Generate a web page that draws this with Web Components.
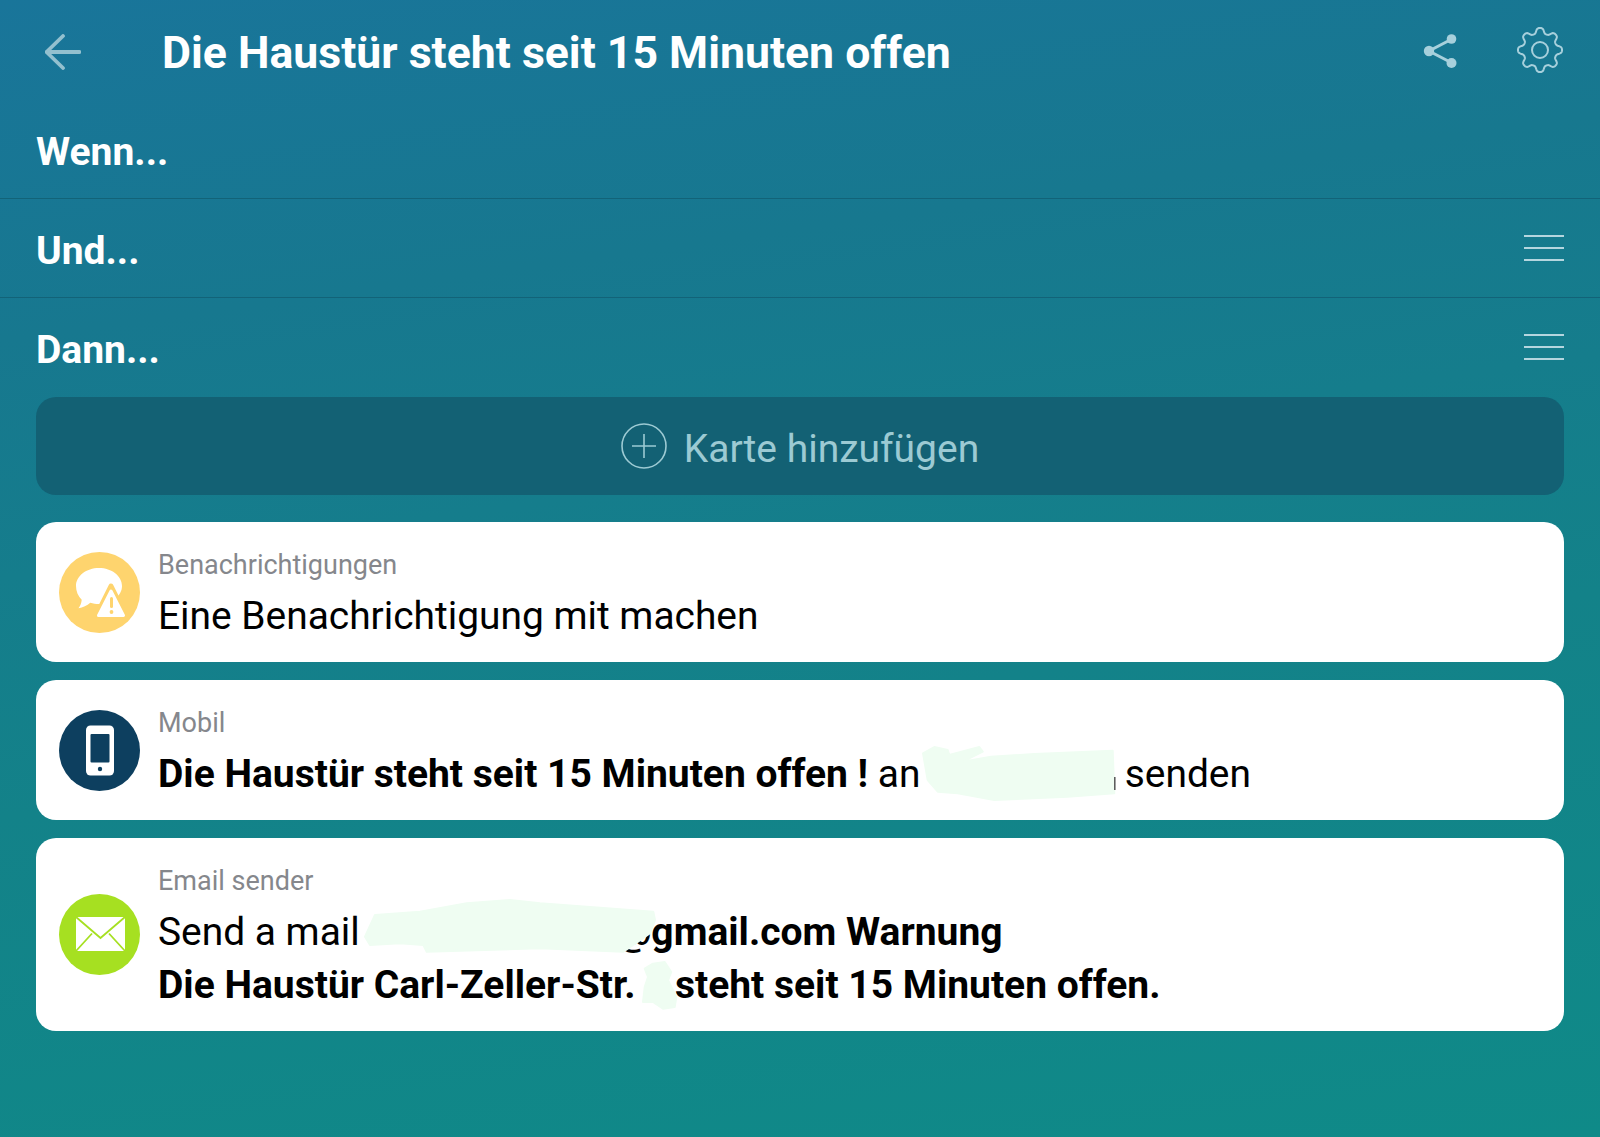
<!DOCTYPE html>
<html lang="de"><head><meta charset="utf-8"><title>Flow</title>
<style>
html,body{margin:0;padding:0;height:100%}
body{width:1600px;height:1137px;overflow:hidden;font-family:Roboto,"Liberation Sans",sans-serif;background:linear-gradient(172deg,#19759a 0%,#17788f 25%,#138289 60%,#0f8a88 100%);}
</style></head><body>
<flow-page></flow-page>
<template id="t-page"><style>
:host{display:flex;flex-direction:column;height:1137px}
.list{display:flex;flex-direction:column;gap:18px;padding:0 36px;margin-top:27px}
.pad{padding:0 36px}
b{font-weight:700;font-size:39px;line-height:0}
</style>
<flow-header></flow-header>
<flow-section label="Wenn..." divider></flow-section>
<flow-section label="Und..." divider menu></flow-section>
<flow-section label="Dann..." menu></flow-section>
<div class="pad"><add-card>Karte hinzufügen</add-card></div>
<div class="list">
<flow-card kind="bell" label="Benachrichtigungen">Eine Benachrichtigung mit machen</flow-card>
<flow-card kind="phone" label="Mobil"><b>Die Haustür steht seit 15 Minuten offen !</b> an <redact-blob kind="a"></redact-blob> senden</flow-card>
<flow-card kind="mail" label="Email sender">Send a mail <redact-blob kind="b"></redact-blob><b>@gmail.com Warnung</b><br><b>Die Haustür Carl-Zeller-Str. <redact-blob kind="c"></redact-blob> steht seit 15 Minuten offen.</b></flow-card>
</div>
</template>
<script>
function gearPath(cx,cy){
  let d='';
  for(let i=0;i<=240;i++){
    const t=i/240*Math.PI*2;
    const c=Math.cos(8*t);
    const s=Math.tanh(1.6*c)/Math.tanh(1.6);
    const r=19.4+2.6*s;
    const x=cx+r*Math.sin(t),y=cy-r*Math.cos(t);
    d+=(i?'L':'M')+x.toFixed(2)+' '+y.toFixed(2);
  }
  return d+'Z';
}
function el(name,cls){customElements.define(name,cls)}
el('flow-page',class extends HTMLElement{connectedCallback(){
  this.attachShadow({mode:'open'}).appendChild(document.getElementById('t-page').content.cloneNode(true));
}});
el('flow-header',class extends HTMLElement{connectedCallback(){
  this.attachShadow({mode:'open'}).innerHTML=`<style>
  :host{display:flex;align-items:center;height:100px;box-sizing:border-box;padding:4px 36px 0 45px;color:#fff}
  .back{width:36px;height:36px;flex:none;margin-right:81px}
  h1{margin:0;flex:1;font:700 44.6px/52px Roboto,sans-serif;letter-spacing:0;margin-top:2px}
  .ic{flex:none;display:block}
  </style>
  <svg class="back" viewBox="0 0 36 36" fill="none" stroke="#93c0cf" stroke-width="3.8" stroke-linecap="round" stroke-linejoin="round"><path d="M1.5 18H34.500M18 2L1.500 18L18 34"/></svg>
  <h1>Die Haustür steht seit 15 Minuten offen</h1>
  <svg class="ic" style="width:40px;height:40px;margin-right:53px;margin-top:-2px" viewBox="0 0 40 40"><g fill="#a7d0dc" stroke="#a7d0dc"><path d="M29 8L6 20L29 32" fill="none" stroke-width="3"/><circle cx="28.500" cy="8" r="4.800" stroke="none"/><circle cx="6" cy="20" r="5.200" stroke="none"/><circle cx="28.500" cy="32" r="5" stroke="none"/></g></svg>
  <svg class="ic" style="width:48px;height:48px;margin-top:-4px" viewBox="0 0 48 48" fill="none" stroke="#a7d0dc" stroke-width="2"><path d="${gearPath(24,24)}"/><circle cx="24" cy="24" r="8"/></svg>`;
}});
el('flow-section',class extends HTMLElement{connectedCallback(){
  const menu=this.hasAttribute('menu');
  this.attachShadow({mode:'open'}).innerHTML=`<style>
  :host{display:flex;align-items:center;justify-content:space-between;height:99px;box-sizing:border-box;padding:5px 36px 0;color:#fff;${this.hasAttribute('divider')?'border-bottom:1px solid #126378;':''}}
  .t{font:700 39px/46px Roboto,sans-serif}
  .m{display:flex;flex-direction:column;gap:10px;margin-top:-6px}
  .m i{display:block;width:40px;height:2px;background:#b5d6df}
  </style><div class="t">${this.getAttribute('label')}</div>${menu?'<div class="m"><i></i><i></i><i></i></div>':''}`;
}});
el('add-card',class extends HTMLElement{connectedCallback(){
  this.attachShadow({mode:'open'}).innerHTML=`<style>
  :host{display:flex;align-items:center;justify-content:center;gap:17px;height:98px;border-radius:20px;background:#136174;color:#9ccad3;font:400 39px/46px Roboto,sans-serif}
  svg{width:46px;height:46px;flex:none;margin-top:0}
  span{margin-top:6px}
  </style><svg viewBox="0 0 46 46" fill="none" stroke="#9ccad3" stroke-width="1.6"><circle cx="23" cy="23" r="22"/><path d="M23 11V35M11 23H35"/></svg><span><slot></slot></span>`;
}});
const icons={
bell:`<svg viewBox="0 0 81 81"><circle cx="40.500" cy="40.500" r="40.500" fill="#fed46e"/><path d="M40 16c12.700 0 23 8 23 18s-10.300 18-23 18c-3 0-6-.4-8.700-1.300C28 53.500 24 55.500 19.500 56.300c1.900-2.700 3-5.400 3.200-8.600C19 44 17 39.200 17 34c0-10 10.300-18 23-18z" fill="#fff"/><path d="M52 34L68 66H36Z" fill="#fed46e" stroke="#fed46e" stroke-width="5" stroke-linejoin="round"/><path d="M52 39L64.500 63.500H39.500Z" fill="#fff" stroke="#fff" stroke-width="3" stroke-linejoin="round"/><path d="M52.500 46.500v8" stroke="#fed46e" stroke-width="3" stroke-linecap="round"/><circle cx="52.500" cy="60" r="1.900" fill="#fed46e"/></svg>`,
phone:`<svg viewBox="0 0 81 81"><circle cx="40.500" cy="40.500" r="40.500" fill="#0d3f5f"/><rect x="27" y="15.500" width="28" height="50" rx="4.500" fill="#fff"/><rect x="31.500" y="24" width="19" height="28.500" rx="1" fill="#0d3f5f"/><circle cx="41" cy="59" r="2.200" fill="#0d3f5f"/></svg>`,
mail:`<svg viewBox="0 0 81 81"><circle cx="40.500" cy="40.500" r="40.500" fill="#a6e021"/><path d="M17 23H66V57H17z" fill="#fff"/><path d="M17 23L41.500 44L66 23" fill="none" stroke="#a6e021" stroke-width="1.800"/><path d="M17 57L33 39.500M66 57L50 39.500" stroke="#a6e021" stroke-width="1.800"/></svg>`};
el('flow-card',class extends HTMLElement{connectedCallback(){
  this.attachShadow({mode:'open'}).innerHTML=`<style>
  :host{display:flex;align-items:center;gap:18px;background:#fff;border-radius:20px;padding:0 23px;color:#000}
  .i{width:81px;height:81px;flex:none;display:block}
  .i svg{display:block;width:81px;height:81px}
  .b{padding:26px 0 20px}
  .l{font:400 27px/34px Roboto,sans-serif;color:#85878c;margin-bottom:7px}
  .c{font:400 38.9px/53px Roboto,sans-serif}
  </style><div class="i">${icons[this.getAttribute('kind')]}</div><div class="b"><div class="l">${this.getAttribute('label')}</div><div class="c"><slot></slot></div></div>`;
}});
const blobs={
a:{w:185,x:-7,y:-39,vw:193,vh:53,d:'M0 6.300L11.300 0L24.700 3L26.300 8L56.300 0L59.700 4.700L39.700 14.700L68 9.700L111.300 7L189.700 3.700L191.300 46.300L144.700 49.700L71.300 53L34.700 46.300L14.700 44.700L4.700 33Z',extra:'<path d="M191.800 30V43" stroke="#555" stroke-width="1.500"/>'},
b:{w:247,x:-4,y:-44,vw:290,vh:52,d:'M0 36.700L10 15L55 11.700L101.700 3.300L145 0L175 3.300L241.700 8.300L288.300 11.700L290 20L285 33.300L268.300 45L258.300 51.700L175 48.300L61.700 51.700L58.300 45L35 43.300L5 45Z'},
c:{w:20,x:-2,y:-35,vw:34,vh:47,d:'M1.700 6.700L10 1.700L21.700 0L28.300 10L25 18.300L33.300 35L31.700 45L20 46.700L10 40L0 40L1.700 25L5 15Z'}};
el('redact-blob',class extends HTMLElement{connectedCallback(){
  const b=blobs[this.getAttribute('kind')];
  this.attachShadow({mode:'open'}).innerHTML=`<style>:host{display:inline-block;position:relative;width:${b.w}px;height:1px}
  svg{position:absolute;left:${b.x}px;top:${b.y}px;overflow:visible}</style>
  <svg width="${b.vw}" height="${b.vh}" viewBox="0 0 ${b.vw} ${b.vh}"><path d="${b.d}" fill="#effdf2" stroke="#effdf2" stroke-width="2" stroke-linejoin="round"/>${b.extra||''}</svg>`;
}});
</script>
</body></html>
